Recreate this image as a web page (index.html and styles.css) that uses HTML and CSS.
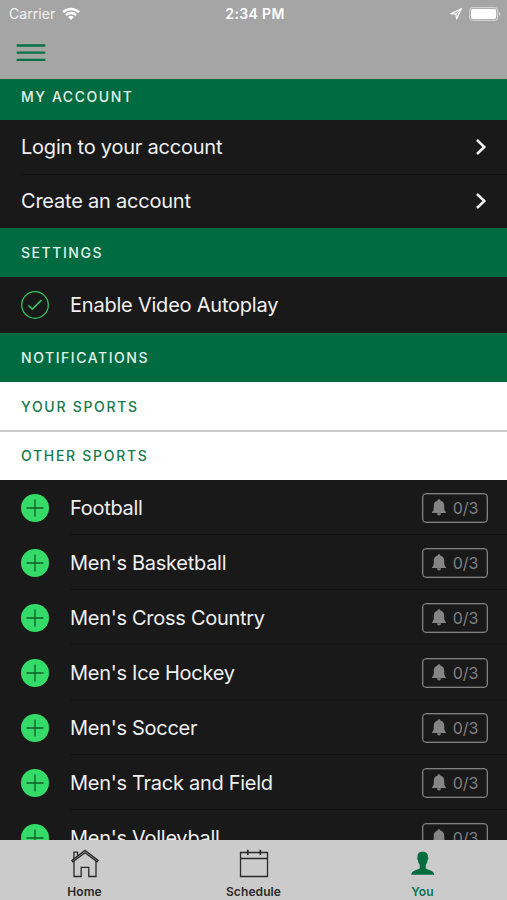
FILE: index.html
```html
<!DOCTYPE html>
<html lang="en">
<head>
<meta charset="utf-8">
<title>You</title>
<link rel="stylesheet" href="styles.css">
</head>
<body>
<svg class="defs" width="0" height="0" aria-hidden="true">
  <symbol id="plus" viewBox="0 0 28 28"><circle cx="14" cy="14" r="14" fill="#35db68"/><path d="M14 5.500v17M5.500 14h17" stroke="#125c2a" stroke-width="1.300"/></symbol>
  <symbol id="bell" viewBox="0 0 14 17"><path d="M7 .3c.8 0 1.300.5 1.300 1.200 2.500.6 3.900 2.500 3.900 4.900 0 4.300.3 5.300 1.700 6.700v.9H.1v-.9c1.400-1.400 1.700-2.400 1.700-6.700 0-2.400 1.400-4.300 3.900-4.900C5.700.8 6.200.3 7 .3zM5 14.300h4c-.1 1.400-.9 2.200-2 2.200s-1.900-.8-2-2.200z" fill="#858585"/></symbol>
  <symbol id="chevron" viewBox="0 0 12 18"><path d="M2 2l7.300 7L2 16" fill="none" stroke="#f4f4f4" stroke-width="2.500"/></symbol>
</svg>
<div class="screen">
  <header class="header">
    <div class="status">
      <div class="carrier"><span>Carrier</span>
        <svg width="18" height="14" viewBox="0 0 18 14" fill="none" stroke="#fff" stroke-width="2.400"><path d="M1 5.200a11.500 11.500 0 0 1 16 0M3.900 8.100a7.400 7.400 0 0 1 10.200 0"/><path d="M9 13L6.100 10.100a4.200 4.200 0 0 1 5.800 0z" fill="#fff" stroke="none"/></svg>
      </div>
      <div class="time">2:34 PM</div>
      <div class="power">
        <svg width="12" height="12" viewBox="0 0 12 12"><path d="M11.300.7L6.600 11 6 6.200.8 5.700z" fill="none" stroke="#fff" stroke-width="1.200" stroke-linejoin="round"/><path d="M11.300.7L6 6.200" stroke="#fff" stroke-width="1.200"/></svg>
        <svg width="32" height="14" viewBox="0 0 32 14"><rect x=".6" y=".6" width="28" height="12.800" rx="3.500" fill="none" stroke="#d2d2d2" stroke-width="1.100"/><rect x="2" y="2" width="25.200" height="10" rx="2" fill="#fff"/><path d="M30 4.800c1.900.8 1.900 3.600 0 4.400z" fill="#d2d2d2"/></svg>
      </div>
    </div>
    <svg class="menu" width="30" height="20" viewBox="0 0 30 20"><path d="M1.700 2.500h26.600M1.700 9.600h26.600M1.700 16.900h26.600" stroke="#08704a" stroke-width="2.400" stroke-linecap="round"/></svg>
  </header>
  <main class="list">
    <h2 class="section first"><span>MY ACCOUNT</span></h2>
    <a class="row link"><span>Login to your account</span><svg width="12" height="18"><use href="#chevron"/></svg></a>
    <a class="row link divided"><span>Create an account</span><svg width="12" height="18"><use href="#chevron"/></svg></a>
    <h2 class="section"><span>SETTINGS</span></h2>
    <div class="row option"><svg class="mark" width="28" height="28" viewBox="0 0 28 28" fill="none" stroke="#35c45e"><circle cx="14" cy="14" r="13.300" stroke-width="1.300"/><path d="M7.500 14.500l3.800 3.600 9.200-9" stroke-width="1.600"/></svg><span>Enable Video Autoplay</span></div>
    <h2 class="section"><span>NOTIFICATIONS</span></h2>
    <h3 class="section light"><span>YOUR SPORTS</span></h3>
    <h3 class="section light ruled"><span>OTHER SPORTS</span></h3>
    <div class="row sport"><svg class="mark" width="28" height="28"><use href="#plus"/></svg><span>Football</span><div class="badge"><svg width="14" height="17"><use href="#bell"/></svg><b>0/3</b></div></div>
    <div class="row sport"><svg class="mark" width="28" height="28"><use href="#plus"/></svg><span>Men's Basketball</span><div class="badge"><svg width="14" height="17"><use href="#bell"/></svg><b>0/3</b></div></div>
    <div class="row sport"><svg class="mark" width="28" height="28"><use href="#plus"/></svg><span>Men's Cross Country</span><div class="badge"><svg width="14" height="17"><use href="#bell"/></svg><b>0/3</b></div></div>
    <div class="row sport"><svg class="mark" width="28" height="28"><use href="#plus"/></svg><span>Men's Ice Hockey</span><div class="badge"><svg width="14" height="17"><use href="#bell"/></svg><b>0/3</b></div></div>
    <div class="row sport"><svg class="mark" width="28" height="28"><use href="#plus"/></svg><span>Men's Soccer</span><div class="badge"><svg width="14" height="17"><use href="#bell"/></svg><b>0/3</b></div></div>
    <div class="row sport"><svg class="mark" width="28" height="28"><use href="#plus"/></svg><span>Men's Track and Field</span><div class="badge"><svg width="14" height="17"><use href="#bell"/></svg><b>0/3</b></div></div>
    <div class="row sport"><svg class="mark" width="28" height="28"><use href="#plus"/></svg><span>Men's Volleyball</span><div class="badge"><svg width="14" height="17"><use href="#bell"/></svg><b>0/3</b></div></div>
  </main>
  <nav class="tabs">
    <a class="tab"><svg width="30" height="30" viewBox="0 0 30 30" fill="none" stroke="#292929" stroke-width="1.300"><path d="M2.800 12.800L1.900 11.500 15 1.400l13.100 10.100-.9 1.300L15 3.700z"/><path d="M4 12V27.500h7.200V18.300h7.600v9.200H26V12M3.900 10V3.200h3.600v3.600"/></svg><span>Home</span></a>
    <a class="tab"><svg width="30" height="30" viewBox="0 0 30 30" fill="none" stroke="#292929" stroke-width="1.300"><path d="M1.500 3.500h27v24h-27zM1.500 9.500h27"/><path d="M8.800.8v5.200M21.300.8v5.200" stroke-width="1.700"/></svg><span>Schedule</span></a>
    <a class="tab active"><svg width="30" height="30" viewBox="0 0 30 30" fill="#006d40"><path d="M14.500 2.700c3.800 0 5.700 2 5.500 5.900.5.200.4 1.900-.4 2.700-.4 2.200-.9 3.500-1.800 4.500v3.700c2.300 1.700 8 1.600 8.500 6.300H3.200c.5-4.700 6.200-4.600 8.500-6.300v-3.700c-.9-1-1.400-2.300-1.800-4.500-.8-.8-.9-2.500-.4-2.700-.2-3.900 1.200-5.900 5-5.900z"/></svg><span>You</span></a>
  </nav>
</div>
</body>
</html>
```
FILE: styles.css
```css
* { box-sizing: border-box; }
body { margin: 0; font-family: Inter, "Liberation Sans", sans-serif; }
svg { display: block; flex: none; }
.defs { position: absolute; }
.screen { width: 507px; height: 900px; display: flex; flex-direction: column; overflow: hidden; background: #191919; }
.header { flex: none; height: 79px; background: #a5a5a5; }
.status { height: 27px; padding: 0 6px 0 9px; display: grid; grid-template-columns: 1fr auto 1fr; align-items: center; color: #fff; font-size: 14px; }
.carrier { display: flex; align-items: center; gap: 7px; color: #f2f2f2; letter-spacing: .05px; }
.time { font-weight: 600; letter-spacing: .35px; }
.power { display: flex; align-items: center; justify-content: flex-end; gap: 7px; }
.menu { margin: 16px 0 0 16px; }
.list { flex: 1; min-height: 0; overflow: hidden; }
.section { margin: 0; height: 49px; padding-left: 21px; display: flex; align-items: center; background: #006a40; color: #e0f2e8; font-size: 14px; font-weight: 500; letter-spacing: 1.55px; }
.first { height: 41px; padding-bottom: 7px; }
.light { height: 48px; background: #fff; color: #16794e; letter-spacing: 1.7px; }
.ruled { height: 50px; padding-bottom: 2px; border-top: 2px solid #c9c9c9; }
.row { display: flex; align-items: center; color: #f0f0f0; font-size: 20px; letter-spacing: -.22px; }
.link { height: 54px; padding: 0 20px 0 21px; justify-content: space-between; }
.divided { background: linear-gradient(#121212, #121212) 21px 0 / 486px 1px no-repeat; }
.option { height: 56px; padding-left: 21px; }
.mark { margin-right: 21px; }
.sport { height: 55px; padding: 0 19px 0 21px; background: linear-gradient(#121212, #121212) 70px 100% / 437px 1px no-repeat; }
.sport > span { letter-spacing: -.28px; }
.badge { margin-left: auto; width: 66px; height: 30px; border: 1px solid #808080; border-radius: 4px; box-shadow: inset 0 0 0 .5px #606060; display: flex; align-items: center; justify-content: center; gap: 7px; color: #808080; letter-spacing: 0; }
.badge b { font-size: 16px; font-weight: 400; }
.tabs { flex: none; height: 60px; background: #cbcbcb; display: grid; grid-template-columns: repeat(3, 1fr); }
.tab { display: flex; flex-direction: column; align-items: center; padding-top: 9px; color: #292929; font-size: 12px; font-weight: 600; line-height: 15px; gap: 5px; letter-spacing: .1px; }
.active { color: #08754a; }
```
